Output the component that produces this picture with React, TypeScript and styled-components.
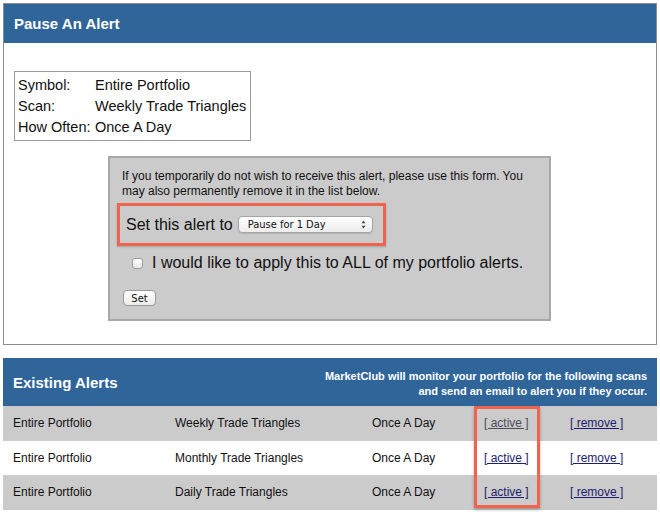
import React from "react";
import styled, { createGlobalStyle } from "styled-components";

const Global = createGlobalStyle`
  html, body { margin: 0; padding: 0; background: #fff; }
  body { font-family: "Liberation Sans", Arial, Helvetica, sans-serif; color: #111; }
`;

const BLUE = "#2f6599";
const CORAL = "#f0644f";

const Page = styled.div`
  padding: 3px;
  width: 654px;
`;

const Panel = styled.section`
  box-sizing: border-box;
  width: 654px;
  border: 1px solid #8c8c8c;
  background: #fff;
`;

const PanelHeader = styled.h2`
  margin: 0;
  height: 39px;
  display: flex;
  align-items: center;
  padding-left: 10px;
  background: ${BLUE};
  color: #fff;
  font-size: 15px;
  font-weight: bold;
`;

const PanelBody = styled.div`
  padding: 28px 0 23px 10px;
`;

const InfoBox = styled.dl`
  margin: 0;
  display: grid;
  width: max-content;
  grid-template-columns: 77px auto;
  border: 1px solid #9a9a9a;
  padding: 3px 4px 2px 3px;
  font-size: 14.5px;
  line-height: 21px;
  dt, dd { margin: 0; }
`;

const FormBox = styled.form`
  box-sizing: border-box;
  width: 443px;
  margin: 15px 0 0 94px;
  border: 2px solid #a8a8a8;
  background: #cbcbcb;
  padding: 11px 12px 13px 12px;
`;

const Intro = styled.p`
  margin: 0;
  font-size: 12px;
  line-height: 15px;
  color: #111;
`;

const Highlight = styled.div`
  box-sizing: border-box;
  display: flex;
  align-items: center;
  gap: 5px;
  width: max-content;
  height: 43px;
  margin: 4px 0 0 -5px;
  padding: 0 10px 0 6px;
  border: 3px solid ${CORAL};
  box-shadow: 0 1px 2px rgba(0, 0, 0, 0.2);
  font-size: 16px;
`;

const FakeSelect = styled.div`
  box-sizing: border-box;
  width: 135px;
  height: 17px;
  display: flex;
  align-items: center;
  justify-content: space-between;
  padding: 0 6px 0 9px;
  border: 1px solid #a5a5a5;
  border-radius: 4px;
  background: linear-gradient(#ffffff, #ececec);
  box-shadow: 0 1px 1px rgba(0, 0, 0, 0.12);
  font-family: "DejaVu Sans Condensed", "DejaVu Sans", sans-serif;
  font-size: 11px;
  color: #111;
`;

const CheckRow = styled.label`
  display: flex;
  align-items: center;
  gap: 9px;
  height: 18px;
  margin: 8px 0 0 10px;
  font-size: 16px;
`;

const Checkbox = styled.span`
  box-sizing: border-box;
  width: 11px;
  height: 11px;
  border: 1px solid #9c9c9c;
  border-radius: 3px;
  background: linear-gradient(#ffffff, #e6e6e6);
`;

const SetButton = styled.button`
  display: block;
  box-sizing: border-box;
  width: 33px;
  height: 16px;
  margin: 18px 0 0 1px;
  padding: 0;
  border: 1px solid #9a9a9a;
  border-radius: 4px;
  background: linear-gradient(#ffffff, #ebebeb);
  font-family: "DejaVu Sans Condensed", "DejaVu Sans", sans-serif;
  font-size: 11px;
  color: #111;
`;

const AlertsSection = styled.section`
  width: 654px;
  margin-top: 13px;
`;

const AlertsHeader = styled.header`
  box-sizing: border-box;
  height: 48px;
  display: flex;
  align-items: center;
  justify-content: space-between;
  padding: 0 10px;
  background: ${BLUE};
  color: #fff;
`;

const AlertsTitle = styled.h2`
  margin: 0;
  font-size: 15px;
  font-weight: bold;
`;

const Note = styled.p`
  margin: 4px 0 0;
  font-size: 11px;
  font-weight: bold;
  line-height: 15px;
  text-align: right;
`;

const Table = styled.div`
  position: relative;
`;

const Row = styled.div<{ $shaded: boolean }>`
  display: grid;
  grid-template-columns: 162px 197px 112px 86px 1fr;
  align-items: center;
  height: 34.5px;
  padding-left: 10px;
  background: ${(p) => (p.$shaded ? "#cbcbcb" : "#ffffff")};
  font-size: 12px;
  color: #111;
`;

const Link = styled.a<{ $visited?: boolean }>`
  color: ${(p) => (p.$visited ? "#4e4e5a" : "#1d1d6f")};
  text-decoration: underline;
  cursor: pointer;
`;

const ColumnMark = styled.div`
  position: absolute;
  left: 471px;
  top: 0;
  width: 66px;
  height: 102px;
  box-sizing: border-box;
  border: 3px solid ${CORAL};
  box-shadow: 0 2px 3px rgba(0, 0, 0, 0.25);
  pointer-events: none;
`;

const Arrows = () => (
  <svg width="5" height="9" viewBox="0 0 5 9">
    <path d="M2.5 0.5 L4.5 3.3 L0.5 3.3 Z" fill="#444" />
    <path d="M2.5 8.5 L4.5 5.7 L0.5 5.7 Z" fill="#444" />
  </svg>
);

const alerts = [
  { scan: "Weekly Trade Triangles" },
  { scan: "Monthly Trade Triangles" },
  { scan: "Daily Trade Triangles" },
];

export default function App() {
  return (
    <>
      <Global />
      <Page>
        <Panel>
          <PanelHeader>Pause An Alert</PanelHeader>
          <PanelBody>
            <InfoBox>
              <dt>Symbol:</dt>
              <dd>Entire Portfolio</dd>
              <dt>Scan:</dt>
              <dd>Weekly Trade Triangles</dd>
              <dt>How Often:</dt>
              <dd>Once A Day</dd>
            </InfoBox>
            <FormBox onSubmit={(e) => e.preventDefault()}>
              <Intro>
                If you temporarily do not wish to receive this alert, please use this form. You
                may also permanently remove it in the list below.
              </Intro>
              <Highlight>
                <span>Set this alert to</span>
                <FakeSelect>
                  <span>Pause for 1 Day</span>
                  <Arrows />
                </FakeSelect>
              </Highlight>
              <CheckRow>
                <Checkbox />
                <span>I would like to apply this to ALL of my portfolio alerts.</span>
              </CheckRow>
              <SetButton type="submit">Set</SetButton>
            </FormBox>
          </PanelBody>
        </Panel>

        <AlertsSection>
          <AlertsHeader>
            <AlertsTitle>Existing Alerts</AlertsTitle>
            <Note>
              MarketClub will monitor your portfolio for the following scans
              <br />
              and send an email to alert you if they occur.
            </Note>
          </AlertsHeader>
          <Table>
            {alerts.map((a, i) => (
              <Row key={a.scan} $shaded={i % 2 === 0}>
                <span>Entire Portfolio</span>
                <span>{a.scan}</span>
                <span>Once A Day</span>
                <span>
                  <Link $visited={i === 0}>[ active ]</Link>
                </span>
                <span>
                  <Link>[ remove ]</Link>
                </span>
              </Row>
            ))}
            <ColumnMark />
          </Table>
        </AlertsSection>
      </Page>
    </>
  );
}
